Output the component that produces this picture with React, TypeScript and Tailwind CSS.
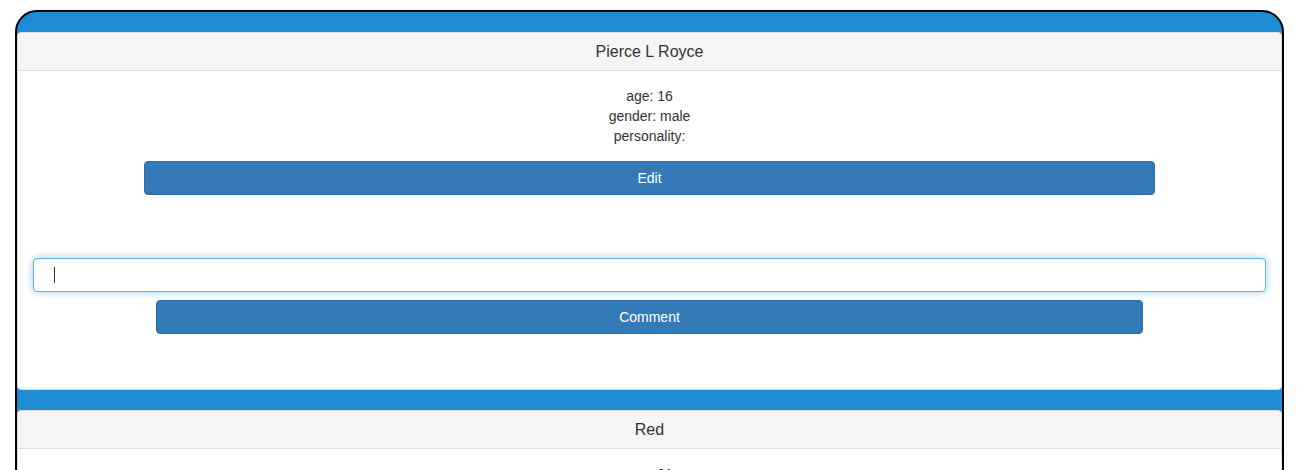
const characters = [
  { name: "Pierce L Royce", age: 16, gender: "male", personality: "" },
  { name: "Red", age: 21, gender: "male", personality: "" },
];

type Character = (typeof characters)[number];

function CharacterPanel({ c, withCaret }: { c: Character; withCaret?: boolean }) {
  return (
    <div className="mb-[20px] rounded-[4px] border border-[#dddddd] bg-white">
      <div className="rounded-t-[3px] border-b border-[#dddddd] bg-[#f5f5f5] py-[10px] text-center text-[16px] leading-[17px] text-[#333333]">
        {c.name}
      </div>
      <div className="py-[15px] text-center text-[14px] leading-[20px] text-[#333333]">
        <div>age: {c.age}</div>
        <div>gender: {c.gender}</div>
        <div>personality: {c.personality}</div>
        <button className="mx-auto mt-[15px] block h-[34px] w-[80%] rounded-[4px] border border-[#2e6da4] bg-[#337ab7] text-[14px] text-white">
          Edit
        </button>
        <form className="mt-[63px] px-[15px] pb-[40px]" onSubmit={(e) => e.preventDefault()}>
          <div className="relative">
            <input
              type="text"
              className="block h-[34px] w-full rounded-[4px] border border-[#66afe9] bg-white px-[20px] text-[14px] text-[#555555] shadow-[inset_0_1px_1px_rgba(0,0,0,0.075),0_0_8px_rgba(102,175,233,0.6)] outline-none"
            />
            {withCaret && (
              <span className="pointer-events-none absolute left-[21px] top-[9px] h-[16px] w-px bg-[#333333]" />
            )}
          </div>
          <button className="mx-auto mt-[8px] block h-[34px] w-[80%] rounded-[4px] border border-[#2e6da4] bg-[#337ab7] text-[14px] text-white">
            Comment
          </button>
        </form>
      </div>
    </div>
  );
}

export default function App() {
  return (
    <div className="min-h-screen bg-white pl-[15px] pt-[10px] font-['Liberation_Sans',Arial,sans-serif]">
      <div className="w-[1269px] rounded-t-[22px] border-2 border-black bg-[#1e8cd5] pt-[20px]">
        {characters.map((c, i) => (
          <CharacterPanel key={c.name} c={c} withCaret={i === 0} />
        ))}
      </div>
    </div>
  );
}
